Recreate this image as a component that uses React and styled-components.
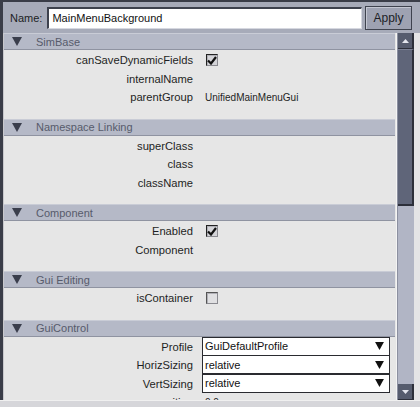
import React from 'react'
import styled, { createGlobalStyle } from 'styled-components'

const GlobalStyle = createGlobalStyle`
    html, body {
        margin: 0;
        padding: 0;
        background: #dcdcdc;
    }
    * {
        box-sizing: border-box;
    }
`

const Window = styled.div`
    width: 420px;
    height: 407px;
    display: flex;
    flex-direction: column;
    background: #a7abb9;
    border-top: 2px solid #3a3d48;
    font-family: "Liberation Sans", Arial, sans-serif;
    overflow: hidden;
`

const TopBar = styled.div`
    height: 31px;
    display: flex;
    align-items: center;
    padding: 0 8px 0 7px;
    border-left: 3px solid #3a3d48;
`

const NameLabel = styled.span`
    font-size: 11px;
    color: #1c1e24;
    margin-right: 5px;
`

const NameInput = styled.div`
    width: 315px;
    height: 22px;
    background: #ffffff;
    border-top: 2px solid #3e424e;
    border-left: 2px solid #3e424e;
    border-right: 1px solid #d6d8e0;
    border-bottom: 1px solid #d6d8e0;
    font-size: 11px;
    color: #111;
    display: flex;
    align-items: center;
    padding-left: 3px;
`

const ApplyButton = styled.div`
    margin-left: 3px;
    width: 47px;
    height: 24px;
    background: #9ea2b2;
    border: 1px solid #3e424e;
    box-shadow: inset 1px 1px 0 #c4c7d2;
    font-size: 12px;
    color: #1c1e26;
    display: flex;
    align-items: center;
    justify-content: center;
`

const Body = styled.div`
    flex: 1;
    display: flex;
    min-height: 0;
    border-left: 3px solid #3a3d48;
    background: #e4e4e6;
`

const List = styled.div`
    flex: 1;
    overflow: hidden;
    background: #e6e6e6;
    border-left: 1px solid #c8c8cc;
    border-right: 1px solid #f4f4f4;
`

const Header = styled.div`
    height: 17px;
    margin-right: 1px;
    display: flex;
    align-items: center;
    background: #b5b9c7;
    border-top: 1px solid #c9ccd6;
    border-bottom: 1px solid #8f93a1;
    font-size: 11px;
    color: #575b6b;
`

const Arrow = styled.svg`
    margin: 0 14px 0 8px;
    flex: none;
`

const SectionBody = styled.div`
    padding: 1px 0 12px;
`

const Row = styled.div`
    height: 18.5px;
    display: grid;
    grid-template-columns: 189px 1fr;
    column-gap: 9px;
    align-items: center;
    font-size: 11.2px;
    color: #1e1f24;
`

const Label = styled.div`
    text-align: right;
`

const Value = styled.div`
    padding-left: 3px;
    font-size: 10px;
`

const Check = styled.div`
    margin-left: 4px;
    width: 12px;
    height: 12px;
    background: ${p => (p.$checked ? '#d4d4d8' : '#e0e0e2')};
    border-top: 1px solid ${p => (p.$checked ? '#222' : '#555')};
    border-left: 1px solid ${p => (p.$checked ? '#222' : '#555')};
    border-right: 1px solid #8a8a90;
    border-bottom: 1px solid #8a8a90;
    box-shadow: inset 1px 1px 0 #b0b0b6;
    display: flex;
    align-items: center;
    justify-content: center;
`

const Dropdown = styled.div`
    margin-right: 6px;
    height: 19px;
    margin-top: -1px;
    background: #ffffff;
    border: 1px solid #2a2b30;
    display: flex;
    align-items: center;
    justify-content: space-between;
    padding: 0 5px 0 2px;
    font-size: 11px;
    color: #111;
`

const ScrollBar = styled.div`
    width: 17px;
    flex: none;
    display: flex;
    flex-direction: column;
    background: #b1b5c5;
    border-left: 1px solid #8c90a0;
    margin-right: 6px;
`

const ScrollButton = styled.div`
    height: 16px;
    background: #565c6e;
    border-right: 2px solid #2c2f3a;
    border-bottom: 1px solid #2c2f3a;
    display: flex;
    align-items: center;
    justify-content: center;
`

const Thumb = styled.div`
    height: 157px;
    background: #5f6579;
    border-right: 2px solid #2c2f3a;
    border-bottom: 2px solid #2c2f3a;
    border-top: 1px solid #7a8094;
`

const Track = styled.div`
    flex: 1;
`

const BottomEdge = styled.div`
    height: 7px;
    background: #d6d6da;
    border-top: 1px solid #f0f0f0;
`

const sections = [
    {
        title: 'SimBase',
        rows: [
            { label: 'canSaveDynamicFields', check: true },
            { label: 'internalName' },
            { label: 'parentGroup', value: 'UnifiedMainMenuGui' },
        ],
    },
    {
        title: 'Namespace Linking',
        rows: [{ label: 'superClass' }, { label: 'class' }, { label: 'className' }],
    },
    {
        title: 'Component',
        rows: [{ label: 'Enabled', check: true }, { label: 'Component' }],
    },
    {
        title: 'Gui Editing',
        rows: [{ label: 'isContainer', check: false }],
    },
    {
        title: 'GuiControl',
        rows: [
            { label: 'Profile', select: 'GuiDefaultProfile' },
            { label: 'HorizSizing', select: 'relative' },
            { label: 'VertSizing', select: 'relative' },
            { label: 'position', value: '0 0' },
        ],
    },
]

function DownTriangle({ size = 10, color = '#3a3e4c' }) {
    return (
        <svg width={size} height={size - 1} viewBox="0 0 10 9">
            <polygon points="0,0 10,0 5,9" fill={color} />
        </svg>
    )
}

function Field({ row }) {
    if (row.check !== undefined) {
        return (
            <Check $checked={row.check}>
                {row.check && (
                    <svg width="10" height="9" viewBox="0 0 10 9">
                        <path d="M1 4.5 L4 7.5 L9 1" stroke="#111" strokeWidth="2.2" fill="none" />
                    </svg>
                )}
            </Check>
        )
    }
    if (row.select) {
        return (
            <Dropdown>
                {row.select}
                <DownTriangle size={9} color="#111" />
            </Dropdown>
        )
    }
    return <Value>{row.value}</Value>
}

export default function App() {
    return (
        <>
            <GlobalStyle />
            <Window>
                <TopBar>
                    <NameLabel>Name:</NameLabel>
                    <NameInput>MainMenuBackground</NameInput>
                    <ApplyButton>Apply</ApplyButton>
                </TopBar>
                <Body>
                    <List>
                        {sections.map(section => (
                            <div key={section.title}>
                                <Header>
                                    <Arrow width="10" height="9" viewBox="0 0 10 9">
                                        <polygon points="0,0 10,0 5,9" fill="#3a3e4c" />
                                    </Arrow>
                                    {section.title}
                                </Header>
                                <SectionBody>
                                    {section.rows.map(row => (
                                        <Row key={row.label}>
                                            <Label>{row.label}</Label>
                                            <Field row={row} />
                                        </Row>
                                    ))}
                                </SectionBody>
                            </div>
                        ))}
                    </List>
                    <ScrollBar>
                        <ScrollButton>
                            <svg width="7" height="4" viewBox="0 0 7 4">
                                <polygon points="0,4 7,4 3.5,0" fill="#e4e6ee" />
                            </svg>
                        </ScrollButton>
                        <Thumb />
                        <Track />
                        <ScrollButton>
                            <svg width="7" height="4" viewBox="0 0 7 4">
                                <polygon points="0,0 7,0 3.5,4" fill="#e4e6ee" />
                            </svg>
                        </ScrollButton>
                    </ScrollBar>
                </Body>
                <BottomEdge />
            </Window>
        </>
    )
}
